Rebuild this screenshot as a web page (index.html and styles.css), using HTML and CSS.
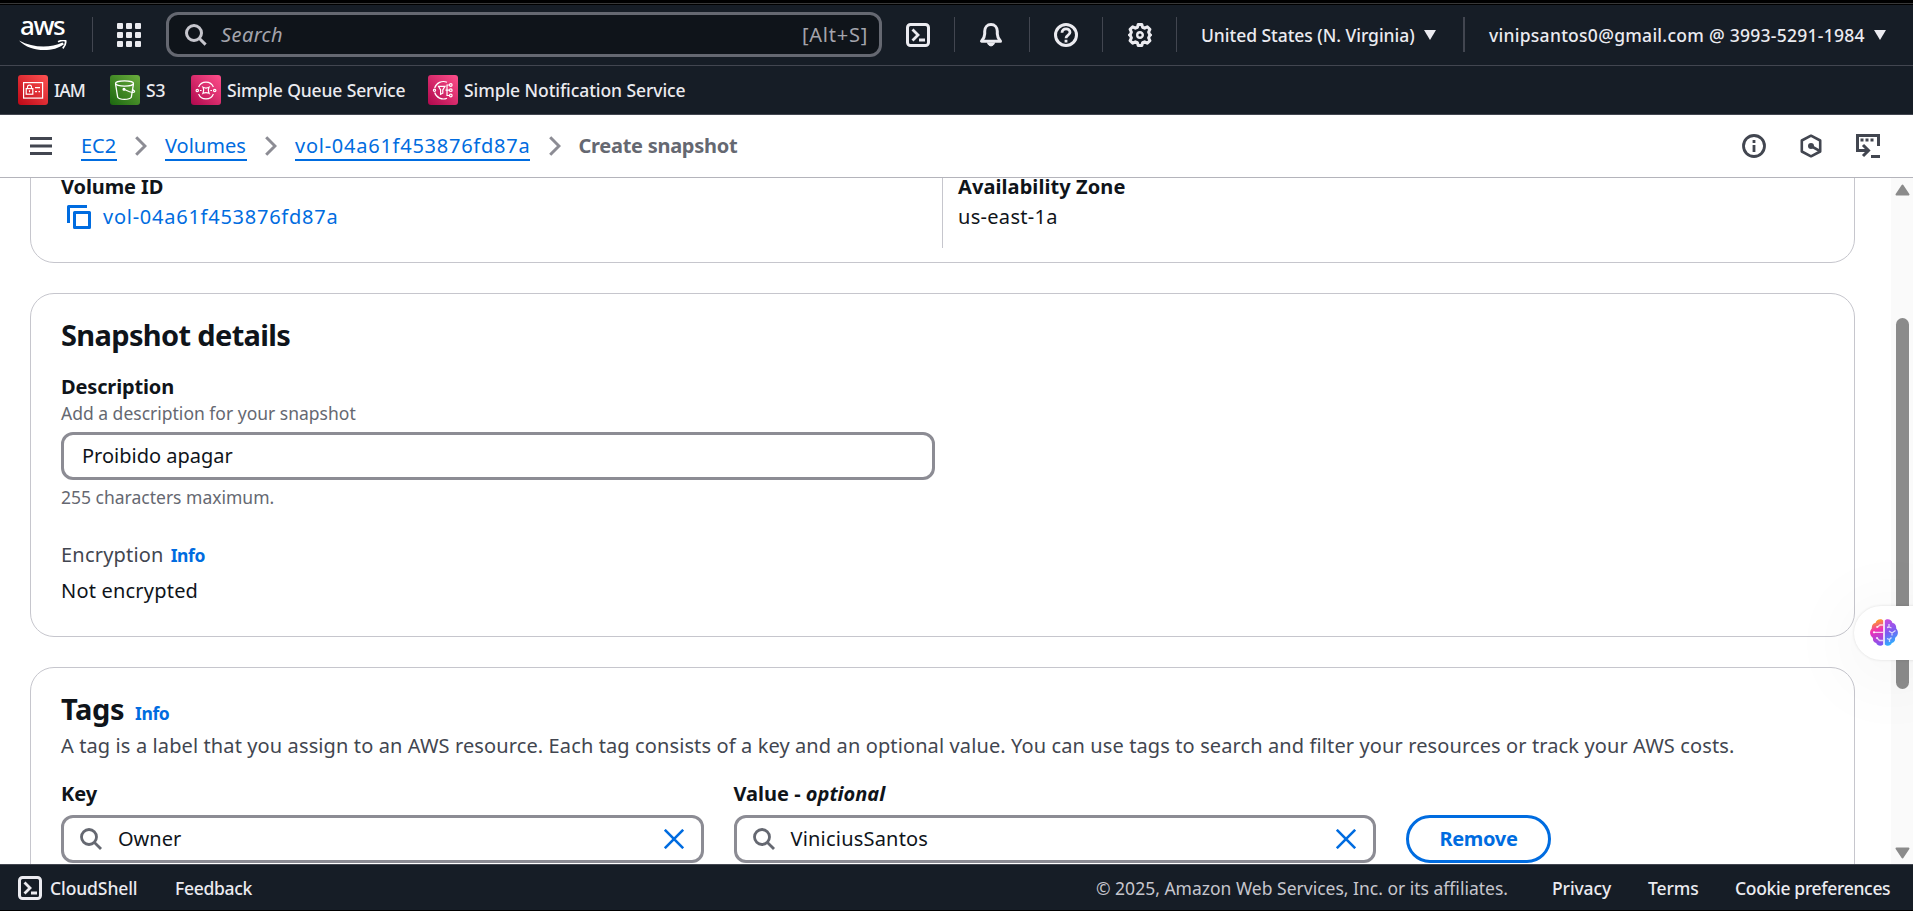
FILE: index.html
```html
<!DOCTYPE html>
<html lang="en">
<head>
<meta charset="utf-8">
<title>Create snapshot | EC2</title>
<link rel="stylesheet" href="styles.css">
</head>
<body>
<div class="window-edge"></div>
<header class="topnav">
  <a class="logo"><span class="logo-text">aws</span>
    <svg class="smile" viewBox="0 0 48 11" width="48" height="11"><path d="M0 .5C14 8 31 8.500 43.500 2.500l1.500 1.700C34 12.800 11 12.300 0 .5z" fill="#fff"/><path d="M39 1.800C42 .4 45 .1 46.600.9c.4 2.400-.7 5.200-2.800 7.400" fill="none" stroke="#fff" stroke-width="1.800"/></svg>
  </a>
  <i class="divider d1"></i>
  <svg class="apps" width="24" height="24" viewBox="0 0 24 24" fill="#ebebf0"><rect width="6" height="6" rx="1"/><rect x="9" width="6" height="6" rx="1"/><rect x="18" width="6" height="6" rx="1"/><rect y="9" width="6" height="6" rx="1"/><rect x="9" y="9" width="6" height="6" rx="1"/><rect x="18" y="9" width="6" height="6" rx="1"/><rect y="18" width="6" height="6" rx="1"/><rect x="9" y="18" width="6" height="6" rx="1"/><rect x="18" y="18" width="6" height="6" rx="1"/></svg>
  <div class="searchbox">
    <svg width="22" height="22" viewBox="0 0 22 22" fill="none" stroke="#c6c6cd" stroke-width="3"><circle cx="9" cy="9" r="7.500"/><path d="M14.200 14.200l6.400 6.400"/></svg>
    <span class="placeholder">Search</span>
    <span class="shortcut">[Alt+S]</span>
  </div>
  <svg class="nav-icon shell" width="24" height="24" viewBox="0 0 24 24" fill="none" stroke="#ebebf0" stroke-width="3"><rect x="1.500" y="1.500" width="21" height="21" rx="3"/><path d="M6.500 6.500l5.500 5.500-5.500 5.500M13 17h6" stroke-width="2.800"/></svg>
  <i class="divider d2"></i>
  <svg class="nav-icon bell" width="24" height="24" viewBox="0 0 24 24" fill="none" stroke="#ebebf0" stroke-width="3" stroke-linejoin="round"><path d="M2.500 18.200h19c-2.200-2.600-3.200-4.200-3.200-7.200V8.300c0-4-2.600-6.800-6.300-6.800S5.700 4.300 5.700 8.300V11c0 3-1 4.600-3.200 7.200z"/><path d="M8.500 19.500c.5 4.500 6.500 4.500 7 0" fill="#ebebf0" stroke-width="1"/></svg>
  <i class="divider d3"></i>
  <svg class="nav-icon help" width="24" height="24" viewBox="0 0 24 24" fill="none" stroke="#ebebf0" stroke-width="3"><circle cx="12" cy="12" r="10.500"/><path d="M8 9.800C8 4.500 16 4.600 16 9.300c0 3-4 2.600-4 6M12 16.800v2.700" stroke-width="2.800"/></svg>
  <i class="divider d4"></i>
  <svg class="nav-icon gear" width="24" height="24" viewBox="0 0 24 24" fill="none" stroke="#ebebf0" stroke-width="3" stroke-linejoin="round"><path d="M10.200 1.500h3.600l.8 2.800 2 .9 2.700-1.400 2.600 2.600-1.300 2.700.9 2 1 .9-1 .9-.9 2 1.300 2.700-2.600 2.600-2.700-1.400-2 .9-.8 2.800h-3.600l-.8-2.800-2-.9-2.700 1.400-2.600-2.600 1.300-2.700-.9-2-1-.9 1-.9.9-2-1.300-2.700 2.600-2.600 2.700 1.400 2-.9z"/><circle cx="12" cy="12" r="2.800" stroke-width="2.400"/></svg>
  <i class="divider d5"></i>
  <span class="nav-text region">United States (N. Virginia)</span>
  <i class="caret"></i>
  <i class="divider d6"></i>
  <span class="nav-text account">vinipsantos0@gmail.com @ 3993-5291-1984</span>
  <i class="caret"></i>
</header>
<nav class="favorites">
  <a class="fav f-iam"><span class="svc red"><svg width="30" height="30" viewBox="0 0 30 30" fill="none" stroke="#fff" stroke-width="1.200"><rect x="5.600" y="7.600" width="19" height="15.500"/><rect x="8.200" y="13.600" width="6.600" height="5.600"/><path d="M9.500 13.500v-1.400a2 2 0 0 1 4 0v1.400M11.500 15.300v2M17 12.600h5M17 16.600h2M20.500 16.600h1.500"/></svg></span><span class="fav-text">IAM</span></a>
  <a class="fav f-s3"><span class="svc green"><svg width="30" height="30" viewBox="0 0 30 30" fill="none" stroke="#fff" stroke-width="1.300"><ellipse cx="14.500" cy="8.500" rx="9" ry="2.600"/><path d="M5.500 8.700l2.200 13.600c1.500 2.800 12 2.800 13.600 0l2.200-13.600M14.500 14.500c4 2 8.500 3.600 9.800 2.600 1-.9-1.400-2.300-2.400-2.700"/><circle cx="14" cy="14.300" r=".9" fill="#fff"/></svg></span><span class="fav-text">S3</span></a>
  <a class="fav f-sqs"><span class="svc pink"><svg width="30" height="30" viewBox="0 0 30 30" fill="none" stroke="#fff" stroke-width="1.200"><path d="M7.600 12A8 8 0 0 1 22.400 12M7.600 19A8 8 0 0 0 22.400 19"/><circle cx="6.300" cy="15.500" r="1.200"/><circle cx="23.700" cy="15.500" r="1.200"/><path d="M12 12.300c2 1 4 1 6 0-1 2-1 4 0 6-2-1-4-1-6 0 1-2 1-4 0-6zM9 15.500h1.600M19.400 15.500H21"/></svg></span><span class="fav-text">Simple Queue Service</span></a>
  <a class="fav f-sns"><span class="svc pink"><svg width="30" height="30" viewBox="0 0 30 30" fill="none" stroke="#fff" stroke-width="1.200"><path d="M19 7.300A9 9 0 0 0 6.700 13M6.700 17.500A9 9 0 0 0 19 23.200"/><circle cx="6.500" cy="15.200" r="1.100"/><path d="M10.500 11.300h6.500l-2.200 3.600v3.300l-2.200 1v-4.300zM19 9.500v11.500M17.500 15.200h4M19 10h2.500M19 20.500h2.500"/><circle cx="22.800" cy="10" r="1.300"/><circle cx="22.800" cy="15.200" r="1.300"/><circle cx="22.800" cy="20.500" r="1.300"/></svg></span><span class="fav-text">Simple Notification Service</span></a>
</nav>
<div class="crumbs">
  <svg class="menu" width="22" height="18" viewBox="0 0 22 18" stroke="#424650" stroke-width="3"><path d="M0 1.500h22M0 9h22M0 16.500h22"/></svg>
  <a class="crumb c1">EC2</a>
  <svg class="chev" width="12" height="20" viewBox="0 0 12 20" fill="none" stroke="#8c8c94" stroke-width="3"><path d="M1.200 1.200L10 10l-8.800 8.800"/></svg>
  <a class="crumb c2">Volumes</a>
  <svg class="chev" width="12" height="20" viewBox="0 0 12 20" fill="none" stroke="#8c8c94" stroke-width="3"><path d="M1.200 1.200L10 10l-8.800 8.800"/></svg>
  <a class="crumb c3">vol-04a61f453876fd87a</a>
  <svg class="chev" width="12" height="20" viewBox="0 0 12 20" fill="none" stroke="#8c8c94" stroke-width="3"><path d="M1.200 1.200L10 10l-8.800 8.800"/></svg>
  <b class="current">Create snapshot</b>
  <div class="tools">
    <svg width="24" height="24" viewBox="0 0 24 24" fill="none" stroke="#424650" stroke-width="2.800"><circle cx="12" cy="12" r="10.500"/><path d="M12 6v3M12 11v7"/></svg>
    <svg width="24" height="24" viewBox="0 0 24 24" fill="none" stroke="#424650" stroke-width="2.600" stroke-linejoin="round"><path d="M12 1.700l9.200 4.800v11L12 22.300l-9.200-4.800v-11zM12 12l9 5.200"/><circle cx="12" cy="12" r="3" fill="#424650" stroke="none"/></svg>
    <svg width="24" height="24" viewBox="0 0 24 24" fill="none" stroke="#424650" stroke-width="3"><path d="M22.500 12V1.500h-21v15H12M7 11l5.500 5.500L7 22M15 22.500h9"/><path d="M4.500 6h3M9.500 6h3M14.500 6h3"/></svg>
  </div>
</div>
<main class="viewport">
  <section class="card volume">
    <div class="col">
      <div class="label"><span class="t-vid">Volume ID</span></div>
      <div class="value copyline"><svg width="24" height="24" viewBox="0 0 24 24" fill="none" stroke="#006ce0" stroke-width="3" stroke-linejoin="round"><path d="M1.500 18V1.500H20"/><rect x="7.500" y="7.500" width="15" height="15"/></svg><a class="t-vol">vol-04a61f453876fd87a</a></div>
    </div>
    <div class="col second">
      <div class="label"><span class="t-az">Availability Zone</span></div>
      <div class="value"><span class="t-use">us-east-1a</span></div>
    </div>
  </section>
  <section class="card details">
    <h2><span class="t-sd">Snapshot details</span></h2>
    <div class="label lead"><span class="t-desc">Description</span></div>
    <div class="hint">Add a description for your snapshot</div>
    <div class="field desc-field"><span>Proibido apagar</span></div>
    <div class="hint after">255 characters maximum.</div>
    <div class="enc"><span class="t-enc">Encryption</span><a class="info">Info</a></div>
    <div class="value notenc">Not encrypted</div>
  </section>
  <section class="card tags">
    <h2><span class="t-tags">Tags</span><a class="info">Info</a></h2>
    <p class="about">A tag is a label that you assign to an AWS resource. Each tag consists of a key and an optional value. You can use tags to search and filter your resources or track your AWS costs.</p>
    <div class="tagrow">
      <div class="tagcol">
        <div class="label">Key</div>
        <div class="field tagfield"><svg width="22" height="22" viewBox="0 0 22 22" fill="none" stroke="#656871" stroke-width="2.800"><circle cx="9" cy="9" r="7.500"/><path d="M14.200 14.200l6.800 6.800"/></svg><span>Owner</span><svg class="clear" width="20" height="20" viewBox="0 0 20 20" stroke="#006ce0" stroke-width="2.600"><path d="M.8.8l18.400 18.400M19.200.8L.8 19.200"/></svg></div>
      </div>
      <div class="tagcol">
        <div class="label">Value - <i>optional</i></div>
        <div class="field tagfield"><svg width="22" height="22" viewBox="0 0 22 22" fill="none" stroke="#656871" stroke-width="2.800"><circle cx="9" cy="9" r="7.500"/><path d="M14.200 14.200l6.800 6.800"/></svg><span class="t-vin">ViniciusSantos</span><svg class="clear" width="20" height="20" viewBox="0 0 20 20" stroke="#006ce0" stroke-width="2.600"><path d="M.8.8l18.400 18.400M19.200.8L.8 19.200"/></svg></div>
      </div>
      <button class="remove">Remove</button>
    </div>
  </section>
  <div class="scrollbar">
    <svg width="15" height="12" viewBox="0 0 15 12"><path d="M7.500 1.500L13.500 10.500h-12z" fill="#8b8b8b" stroke="#8b8b8b" stroke-width="2" stroke-linejoin="round"/></svg>
    <i class="thumb"></i>
    <svg class="down" width="15" height="12" viewBox="0 0 15 12"><path d="M7.500 10.500L13.500 1.500h-12z" fill="#8b8b8b" stroke="#8b8b8b" stroke-width="2" stroke-linejoin="round"/></svg>
  </div>
  <aside class="assistant">
    <svg width="28" height="27" viewBox="0 0 28 27"><defs><linearGradient id="lobeL" gradientUnits="userSpaceOnUse" x1="3" y1="2" x2="11" y2="26"><stop offset="0" stop-color="#ffa21f"/><stop offset=".4" stop-color="#f02fb5"/><stop offset="1" stop-color="#7a58f5"/></linearGradient><linearGradient id="lobeR" gradientUnits="userSpaceOnUse" x1="15" y1="2" x2="25" y2="24"><stop offset="0" stop-color="#c44ae0"/><stop offset=".5" stop-color="#7b5cf2"/><stop offset="1" stop-color="#2bb2ff"/></linearGradient></defs><path d="M13.200 1.500v24c-2 2-6 1.500-7-1.500-2.500-.5-3.700-2.500-3.200-5C-.5 16.500-.8 12 1.800 9.500 1.500 6 3.500 4 5.500 4c.5-4 6-5 7.700-2.500z" fill="url(#lobeL)"/><path d="M14.800 1.500v24c2 2 6 1.500 7-1.500 2.500-.5 3.700-2.500 3.200-5 3.500-2.500 3.800-7 1.200-9.500.3-3.500-1.700-5.500-3.700-5.500-.5-4-6-5-7.700-2.500z" fill="url(#lobeR)"/><path d="M13 6H10L7.500 8M3.500 13.300H13M7 19l2.500 2.500H13M17 8.500l2-.5 2.500 1M19 8V5M19 12l3 2 3.500-2.500M22 14v2.500M17 19.500l2.500 1 2-2M19.500 20.500V23" fill="none" stroke="#fff" stroke-opacity=".75" stroke-width="1.300"/><g fill="#fff" fill-opacity=".85"><circle cx="7.200" cy="8" r="1.100"/><circle cx="4" cy="13.300" r="1.100"/><circle cx="7" cy="19" r="1.100"/></g></svg>
  </aside>
</main>
<footer class="bottom">
  <svg width="24" height="24" viewBox="0 0 24 24" fill="none" stroke="#ebebf0" stroke-width="3"><rect x="1.500" y="1.500" width="21" height="21" rx="3"/><path d="M6.500 6.500l5.500 5.500-5.500 5.500M13 17h6" stroke-width="2.800"/></svg>
  <a class="b-shell">CloudShell</a>
  <a class="b-feed">Feedback</a>
  <span class="copyright">© 2025, Amazon Web Services, Inc. or its affiliates.</span>
  <a class="b-priv">Privacy</a>
  <a class="b-terms">Terms</a>
  <a class="b-cook">Cookie preferences</a>
</footer>
</body>
</html>
```
FILE: styles.css
```css
* { box-sizing: border-box; }
body { margin: 0; width: 1913px; height: 911px; overflow: hidden; display: flex; flex-direction: column; background: #fff; color: #0f141a; font-family: "Noto Sans", sans-serif; font-size: 20px; line-height: 30px; white-space: nowrap; }
svg { display: block; flex: none; }
i.divider, i.caret, i.thumb { display: block; flex: none; }

.window-edge { height: 5px; flex: none; background: linear-gradient(#000 3px, #383838 3px, #383838 4px, #000 4px); }
.topnav { height: 61px; flex: none; display: flex; align-items: center; padding-bottom: 1px; background: #161d26; border-bottom: 1px solid #424650; color: #ebebf0; }
.logo { width: 48px; height: 35px; margin-left: 19px; display: flex; flex-direction: column; }
.logo-text { font-size: 26px; line-height: 17px; height: 24px; font-weight: 500; padding-left: 1px; letter-spacing: -1.4px; color: #fff; }
.smile { margin-top: -1px; }
.divider { width: 1px; height: 35px; background: #424650; }
.d1 { margin-left: 25px; }
.apps { margin-left: 24px; }
.searchbox { margin-left: 25px; width: 716px; height: 45px; border: 3px solid #656871; border-radius: 12px; background: #0f141a; display: flex; align-items: center; padding: 0 11px 0 16px; color: #a4a4ad; }
.placeholder { margin-left: 14px; font-style: italic; flex: 1; letter-spacing: .4px; }
.shortcut { letter-spacing: .75px; }
.nav-icon { margin-left: 24px; }
.d2, .d4, .d5 { margin-left: 24px; }
.d3 { margin-left: 26px; }
.gear { margin-left: 25px; }
.nav-text { font-size: 17.500px; font-weight: 500; }
.region { margin-left: 24px; width: 214px; letter-spacing: -.04px; }
.account { margin-left: 24px; width: 376px; letter-spacing: .27px; }
.caret { margin-left: 9px; border: 6px solid transparent; border-top: 10px solid #ebebf0; border-bottom: 0; }
.d6 { width: 2px; margin-left: 27px; }

.favorites { height: 49px; flex: none; display: flex; align-items: center; background: #161d26; border-bottom: 1px solid #424650; color: #ebebf0; padding-left: 18px; }
.fav { display: flex; align-items: center; gap: 6px; }
.f-iam { width: 92px; letter-spacing: -.9px; }
.f-s3 { width: 81px; letter-spacing: -.2px; }
.f-sqs { width: 237px; letter-spacing: -.13px; }
.f-sns { letter-spacing: -.08px; }
.svc { border-radius: 3px; overflow: hidden; }
.red { background: linear-gradient(45deg, #bd0816, #ff5252); }
.green { background: linear-gradient(45deg, #1b660f, #6cae3e); }
.pink { background: linear-gradient(45deg, #b0084d, #ff4f8b); }
.fav-text { font-size: 17.500px; font-weight: 500; margin-top: -1px; }

.crumbs { height: 63px; flex: none; display: flex; align-items: center; padding-left: 30px; border-bottom: 1px solid #b4b4bb; }
.crumb { color: #006ce0; height: 29px; line-height: 28px; border-bottom: 2px solid #006ce0; }
.c1 { margin-left: 29px; width: 35.500px; }
.c2 { width: 81.500px; }
.c3 { width: 235px; letter-spacing: .75px; }
.chev { margin: 0 18px 0 18.500px; }
.current { color: #656871; letter-spacing: -.28px; line-height: 28px; padding-bottom: 1px; }
.tools { margin-left: auto; margin-right: 33px; display: flex; gap: 33px; }

.viewport { position: relative; flex: 1; overflow: hidden; padding-left: 30px; }
.card { width: 1825px; border: 1px solid #c6c6cd; border-radius: 24px; padding: 23px 30px 0; margin-bottom: 30px; }
.label { font-weight: 700; height: 30px; line-height: 32px; }
.value { height: 30px; line-height: 32px; }
.volume { margin-top: -30px; height: 115px; display: grid; grid-template-columns: 881px 1fr; padding-top: 22px; }
.volume .second { height: 77px; border-left: 1px solid #c6c6cd; padding-left: 15px; }
.copyline { display: flex; align-items: center; padding: 1px 0 0 6px; gap: 12px; color: #006ce0; }
.t-vid { letter-spacing: -.1px; }
.t-vol { letter-spacing: .75px; }
.t-az { letter-spacing: .08px; }
.t-use { letter-spacing: .3px; }
.t-sd { letter-spacing: -.65px; }
.t-desc { letter-spacing: -.15px; }
.t-enc, .notenc { letter-spacing: .2px; }
.t-tags { letter-spacing: -.4px; }
.t-vin { letter-spacing: .2px; }
h2 { margin: 0; font-size: 29px; line-height: 36px; height: 36px; font-weight: 700; display: flex; align-items: baseline; }
.lead { margin-top: 18px; }
.hint { font-size: 17.500px; line-height: 25px; height: 24px; color: #656871; }
.field { height: 48px; border: 3px solid #8c8c94; border-radius: 12px; display: flex; align-items: center; margin-top: 7px; }
.desc-field { width: 874px; padding-left: 18px; }
.after { margin-top: 5px; }
.details { height: 344px; }
.enc { margin-top: 30px; color: #424650; display: flex; align-items: baseline; height: 30px; line-height: 32px; }
.info { color: #006ce0; font-size: 17.500px; font-weight: 700; letter-spacing: -.4px; }
.enc .info { margin-left: 7px; }
.notenc { margin-top: 6px; }
.tags { height: 300px; }
.tags .info { margin-left: 11px; }
.about { margin: 3px 0 18px; height: 30px; line-height: 32px; color: #424650; letter-spacing: .113px; }
.tagrow { display: flex; gap: 30px; align-items: flex-end; }
.tagcol { width: 642.500px; }
.tagfield { padding: 0 17px 0 16px; gap: 16px; }
.clear { margin-left: auto; }
.remove { width: 145px; height: 48px; border: 3px solid #006ce0; border-radius: 24px; background: #fff; color: #006ce0; font: 700 20px/30px "Noto Sans", sans-serif; letter-spacing: -.3px; padding: 0; }

.scrollbar { position: absolute; right: 0; top: 0; width: 22px; height: 100%; background: #fafafa; display: flex; flex-direction: column; align-items: center; padding: 6px 0 5px; }
.thumb { width: 13px; height: 371px; margin-top: 122px; border-radius: 7px; background: #8b8b8b; }
.down { margin-top: auto; }
.assistant { position: absolute; left: 1854px; top: 428px; width: 70px; height: 54px; border-radius: 27px 0 0 27px; background: #fff; box-shadow: 0 10px 80px rgba(0,0,0,.08), 0 0 3px rgba(0,0,0,.12); padding: 13px 0 0 16px; }

.bottom { height: 47px; flex: none; display: flex; align-items: center; padding-left: 18px; background: #161d26; border-top: 1px solid #424650; border-bottom: 1px solid #000; color: #ebebf0; font-size: 17.500px; font-weight: 500; }
.b-shell { margin-left: 8px; width: 125px; letter-spacing: -.1px; }
.b-feed { width: 921px; letter-spacing: -.3px; }
.copyright { width: 456px; color: #c6c6cd; font-weight: 400; }
.b-priv { width: 96px; letter-spacing: -.1px; }
.b-terms { width: 87px; letter-spacing: -.1px; }
.b-cook { letter-spacing: -.32px; }
```
